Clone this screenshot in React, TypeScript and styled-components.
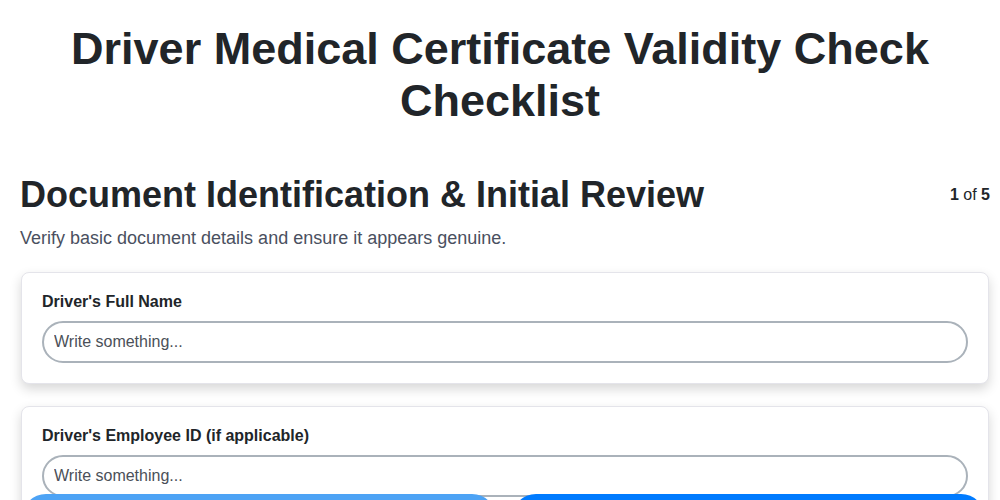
import React from "react";
import styled, { createGlobalStyle } from "styled-components";

const Global = createGlobalStyle`
  html, body { margin: 0; padding: 0; background: #ffffff; }
  body { font-family: "Liberation Sans", Arial, sans-serif; color: #212529; }
  * { box-sizing: border-box; }
`;

const Page = styled.div`
  padding: 23px 10px 80px 20px;
`;

const Title = styled.h1`
  margin: 0 10px 46px 0;
  text-align: center;
  font-size: 45px;
  line-height: 52px;
  font-weight: 700;
  color: #212529;
`;

const SectionHeader = styled.div`
  display: flex;
  justify-content: space-between;
  align-items: center;
`;

const SectionTitle = styled.h2`
  margin: 0;
  font-size: 36px;
  line-height: 44px;
  font-weight: 700;
  color: #212529;
`;

const Counter = styled.div`
  font-size: 16px;
  color: #212529;
  b { font-weight: 700; }
`;

const Subtitle = styled.p`
  margin: 9px 0 22px;
  font-size: 18px;
  line-height: 24px;
  color: #4a5060;
`;

const Card = styled.div`
  margin: 0 1px 22px 1px;
  padding: 20px;
  background: #ffffff;
  border: 1px solid #e4e4ea;
  border-radius: 8px;
  box-shadow: 0 5px 12px rgba(0, 0, 0, 0.16);
`;

const Label = styled.label`
  display: block;
  margin-bottom: 10px;
  font-size: 16px;
  line-height: 18px;
  font-weight: 700;
  color: #212529;
`;

const Input = styled.input`
  display: block;
  width: 100%;
  height: 42px;
  padding: 0 10px;
  border: 2px solid #aab2ba;
  border-radius: 21px;
  font-family: "Liberation Sans", Arial, sans-serif;
  font-size: 16px;
  color: #212529;
  background: #fff;
  outline: none;
  &::placeholder { color: #4b5058; opacity: 1; }
`;

const Footer = styled.div`
  position: fixed;
  left: 0;
  right: 0;
  top: 494px;
  display: flex;
  gap: 16px;
  padding: 0 15px 0 22px;
`;

const NavButton = styled.button<{ $primary?: boolean }>`
  flex: 1;
  height: 48px;
  border: none;
  border-radius: 24px;
  background: ${(p) => (p.$primary ? "#007bff" : "#4da3f5")};
`;

export default function App() {
  return (
    <>
      <Global />
      <Page>
        <Title>Driver Medical Certificate Validity Check Checklist</Title>
        <SectionHeader>
          <SectionTitle>Document Identification &amp; Initial Review</SectionTitle>
          <Counter>
            <b>1</b> of <b>5</b>
          </Counter>
        </SectionHeader>
        <Subtitle>Verify basic document details and ensure it appears genuine.</Subtitle>
        <Card>
          <Label>Driver's Full Name</Label>
          <Input placeholder="Write something..." />
        </Card>
        <Card>
          <Label>Driver's Employee ID (if applicable)</Label>
          <Input placeholder="Write something..." />
        </Card>
      </Page>
      <Footer>
        <NavButton aria-label="Previous" />
        <NavButton aria-label="Next" $primary />
      </Footer>
    </>
  );
}
